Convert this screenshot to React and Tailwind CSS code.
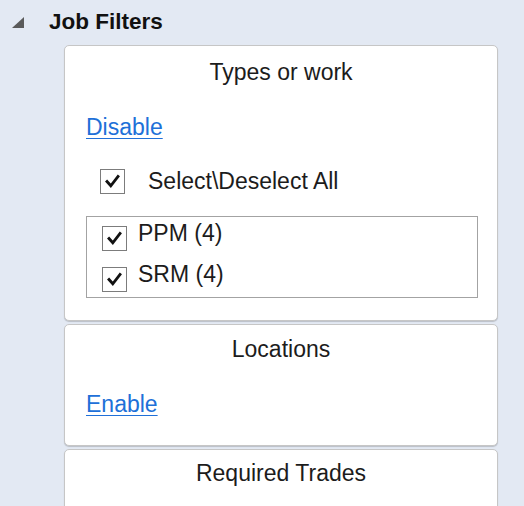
import React from "react";

function CheckBox() {
  return (
    <span className="flex h-[25px] w-[25px] shrink-0 items-center justify-center border border-[#7c7c7c] bg-white">
      <svg width="19" height="19" viewBox="0 0 19 19">
        <path
          d="M4 9.5 L7.8 13.8 L15 4.5"
          fill="none"
          stroke="#111"
          strokeWidth="2.8"
          strokeLinecap="square"
        />
      </svg>
    </span>
  );
}

function Card({ title, pt, className = "", children }) {
  return (
    <div
      className={`rounded-[5px] border border-[#c6c6c6] bg-white shadow-[0_1px_1px_rgba(0,0,0,0.18)] ${pt} ${className}`}
    >
      <div className="text-center text-[#1c1c1c] leading-[26px]">{title}</div>
      {children}
    </div>
  );
}

export default function App() {
  const items = ["PPM (4)", "SRM (4)"];
  return (
    <div
      className="h-[506px] w-[524px] overflow-hidden bg-[#e3e9f3] text-[23px]"
      style={{ fontFamily: '"Liberation Sans", Arial, sans-serif' }}
    >
      <div className="flex items-center pt-[9px] leading-[26px]">
        <svg width="14" height="12" viewBox="0 0 14 12" className="ml-[11px] mt-[2px]">
          <path d="M13 0 L13 11 L1 11 Z" fill="#5a5a5a" />
        </svg>
        <span className="ml-[24px] font-bold text-[22.5px] text-[#111]">Job Filters</span>
      </div>

      <div className="ml-[64px] mt-[10px] flex w-[434px] flex-col gap-[3px]">
        <Card title="Types or work" pt="pt-[13px]" className="h-[276px]">
          <div className="mt-[29px] pl-[21px] leading-[26px]">
            <span className="text-[#2070d8] underline decoration-1 underline-offset-[3px]">Disable</span>
          </div>
          <div className="mt-[28px] flex items-center pl-[35px] leading-[26px]">
            <CheckBox />
            <span className="ml-[23px] text-[#1c1c1c]">Select\Deselect All</span>
          </div>
          <div className="ml-[21px] mt-[22px] h-[82px] w-[392px] border border-[#a3a3a3] pt-[3px]">
            {items.map((it, i) => (
              <div
                key={it}
                className={`flex items-start pl-[15px] leading-[26px] ${i ? "mt-[10px]" : ""}`}
              >
                <span className="mt-[6px]">
                  <CheckBox />
                </span>
                <span className="ml-[11px] text-[#1c1c1c]">{it}</span>
              </div>
            ))}
          </div>
        </Card>

        <Card title="Locations" pt="pt-[11px]" className="h-[122px]">
          <div className="mt-[29px] pl-[21px] leading-[26px]">
            <span className="text-[#2070d8] underline decoration-1 underline-offset-[3px]">Enable</span>
          </div>
        </Card>

        <Card title="Required Trades" pt="pt-[10px]" className="h-[80px]" />
      </div>
    </div>
  );
}
